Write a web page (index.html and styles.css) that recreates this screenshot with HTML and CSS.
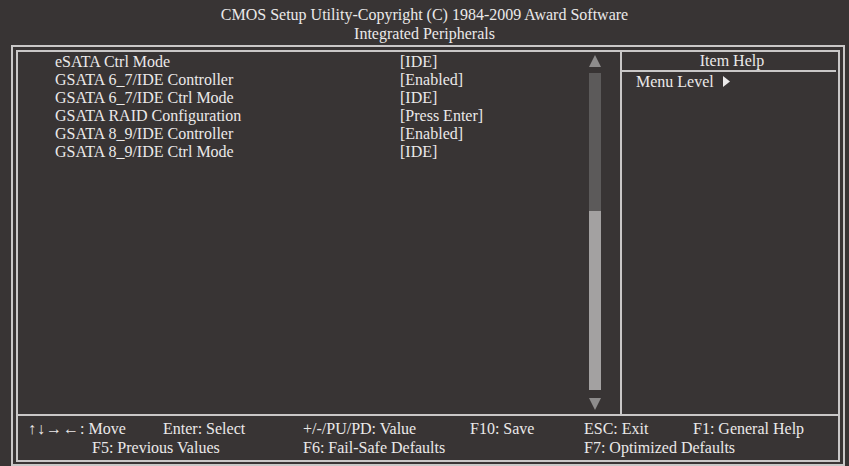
FILE: index.html
```html
<!DOCTYPE html>
<html lang="en">
<head>
    <meta charset="UTF-8">
    <title>Integrated Peripherals</title>
    <link rel="stylesheet" href="styles.css">
</head>
<body>
    <div class="title">
        <div>CMOS Setup Utility-Copyright (C) 1984-2009 Award Software</div>
        <div>Integrated Peripherals</div>
    </div>

    <div class="frame">
        <div class="inner">
            <!-- Menu items -->
            <div class="main">
                <div class="items">
                    <div class="row"><span class="name">eSATA Ctrl Mode</span><span>[IDE]</span></div>
                    <div class="row"><span class="name">GSATA 6_7/IDE Controller</span><span>[Enabled]</span></div>
                    <div class="row"><span class="name">GSATA 6_7/IDE Ctrl Mode</span><span>[IDE]</span></div>
                    <div class="row"><span class="name">GSATA RAID Configuration</span><span>[Press Enter]</span></div>
                    <div class="row"><span class="name">GSATA 8_9/IDE Controller</span><span>[Enabled]</span></div>
                    <div class="row"><span class="name">GSATA 8_9/IDE Ctrl Mode</span><span>[IDE]</span></div>
                </div>
                <div class="scrollbar">
                    <svg class="arrow" width="12" height="12" viewBox="0 0 12 12"><polygon points="6,0 12,12 0,12"/></svg>
                    <div class="track"><div class="thumb"></div></div>
                    <svg class="arrow" width="12" height="12" viewBox="0 0 12 12"><polygon points="0,0 12,0 6,12"/></svg>
                </div>
            </div>

            <!-- Help panel -->
            <div class="help">
                <div class="help-head">Item Help</div>
                <div class="help-row">Menu Level<svg class="level" width="7" height="11" viewBox="0 0 7 11"><polygon points="0,0 7,5.5 0,11"/></svg></div>
            </div>

            <!-- Key legend -->
            <div class="keys">
                <span class="k-move"><span class="arrows">&uarr;&darr;&rarr;&larr;</span>: Move</span>
                <span class="k-select">Enter: Select</span>
                <span class="k-value">+/-/PU/PD: Value</span>
                <span class="k-save">F10: Save</span>
                <span class="k-exit">ESC: Exit</span>
                <span class="k-help">F1: General Help</span>
                <span class="k-prev">F5: Previous Values</span>
                <span class="k-fail">F6: Fail-Safe Defaults</span>
                <span class="k-opt">F7: Optimized Defaults</span>
            </div>
        </div>
    </div>
</body>
</html>
```

FILE: styles.css
```css
body {
    margin: 0;
    height: 466px;
    overflow: hidden;
    background: #383434;
    color: #ebe9e9;
    font-family: "Liberation Serif", "Times New Roman", serif;
    font-size: 16px;
    line-height: 18px;
}
.title {
    text-align: center;
    padding-top: 5px;
    height: 45px;
    box-sizing: border-box;
    line-height: 19px;
}
.frame {
    margin-left: 11px;
    width: 834px;
    height: 421px;
    border: 2px solid #c9c7c7;
    padding: 3px;
    box-sizing: border-box;
}
.inner {
    height: 412px;
    border: 2px solid #c9c7c7;
    box-sizing: border-box;
    display: grid;
    grid-template-columns: 602px 2px 1fr;
    grid-template-rows: 362px 2px 1fr;
}
.main {
    grid-column: 1;
    grid-row: 1;
    display: flex;
}
.items {
    flex: 1;
    padding-left: 37px;
    padding-top: 1px;
}
.row {
    display: flex;
    height: 18px;
}
.name {
    width: 345px;
}
.scrollbar {
    width: 12px;
    margin-right: 19px;
    padding-top: 3px;
    display: flex;
    flex-direction: column;
    align-items: center;
}
.arrow {
    fill: #8e8c8c;
    display: block;
}
.track {
    width: 12px;
    height: 317px;
    margin: 6px 0 8px;
    background: #5c5a5a;
    display: flex;
    flex-direction: column;
    justify-content: flex-end;
}
.thumb {
    height: 179px;
    background: #a3a1a1;
}
.help {
    grid-column: 3;
    grid-row: 1;
    border-left: 2px solid #c9c7c7;
    margin-left: -2px;
    padding-right: 2px;
}
.help-head {
    height: 18px;
    text-align: center;
    border-bottom: 2px solid #c9c7c7;
    padding-left: 6px;
}
.help-row {
    padding-left: 14px;
    height: 18px;
    padding-top: 1px;
}
.level {
    fill: #ebe9e9;
    margin-left: 9px;
}
.keys {
    grid-column: 1 / 4;
    grid-row: 2 / 4;
    border-top: 2px solid #c9c7c7;
    padding: 4px 0 0 10px;
    display: grid;
    grid-template-columns: 64px 71px 140px 167px 114px 109px 1fr;
    grid-template-rows: 19px 19px;
    white-space: nowrap;
}
.arrows {
    letter-spacing: 1px;
}
.k-move { grid-column: 1 / 3; grid-row: 1; }
.k-select { grid-column: 3; grid-row: 1; }
.k-value { grid-column: 4; grid-row: 1; }
.k-save { grid-column: 5; grid-row: 1; }
.k-exit { grid-column: 6; grid-row: 1; }
.k-help { grid-column: 7; grid-row: 1; }
.k-prev { grid-column: 2 / 4; grid-row: 2; }
.k-fail { grid-column: 4; grid-row: 2; }
.k-opt { grid-column: 6 / 8; grid-row: 2; }
```
